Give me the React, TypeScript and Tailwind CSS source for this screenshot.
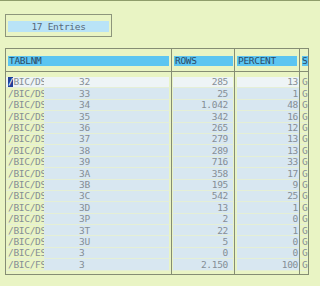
import * as React from "react";

const rows = [
  { name: "/BIC/DS", suffix: "32", count: "285", pct: "13" },
  { name: "/BIC/DS", suffix: "33", count: "25", pct: "1" },
  { name: "/BIC/DS", suffix: "34", count: "1.042", pct: "48" },
  { name: "/BIC/DS", suffix: "35", count: "342", pct: "16" },
  { name: "/BIC/DS", suffix: "36", count: "265", pct: "12" },
  { name: "/BIC/DS", suffix: "37", count: "279", pct: "13" },
  { name: "/BIC/DS", suffix: "38", count: "289", pct: "13" },
  { name: "/BIC/DS", suffix: "39", count: "716", pct: "33" },
  { name: "/BIC/DS", suffix: "3A", count: "358", pct: "17" },
  { name: "/BIC/DS", suffix: "3B", count: "195", pct: "9" },
  { name: "/BIC/DS", suffix: "3C", count: "542", pct: "25" },
  { name: "/BIC/DS", suffix: "3D", count: "13", pct: "1" },
  { name: "/BIC/DS", suffix: "3P", count: "2", pct: "0" },
  { name: "/BIC/DS", suffix: "3T", count: "22", pct: "1" },
  { name: "/BIC/DS", suffix: "3U", count: "5", pct: "0" },
  { name: "/BIC/ES", suffix: "3", count: "0", pct: "0" },
  { name: "/BIC/FS", suffix: "3", count: "2.150", pct: "100" },
];

const font = "font-['DejaVu_Sans_Mono','Liberation_Mono',monospace] text-[9.5px] tracking-[-0.3px] leading-none";

export default function App() {
  return (
    <div className={`w-[320px] h-[286px] overflow-hidden bg-[#e9f4c4] border-t border-[#8f9d6b] pl-[5px] ${font}`}>
      {/* Entries counter */}
      <div className="mt-[13px] w-[107px] h-[23px] border border-[#8d957c] pt-[6px] px-[2px]">
        <div className="h-[11px] bg-[#b9e3f7] flex items-center justify-center text-[#56687a]">
          17 Entries
        </div>
      </div>

      {/* Table */}
      <div className="mt-[11px] w-[304px] h-[227px] border border-[#858d74] flex">
        {/* TABLNM */}
        <div className="w-[166px] border-r border-[#858d74] flex flex-col">
          <div className="h-[23px] border-b border-[#858d74] pt-[7px] pl-[2px] pr-[2px]">
            <div className="h-[10px] bg-[#5cc5f1] flex items-center pl-[1px] text-[#2c4a66]">TABLNM</div>
          </div>
          <div className="h-[5px]" />
          {rows.map((r, i) => (
            <div key={i} className="h-[11.4px] flex border-b border-[#e5efd6]">
              <div className={`w-[38px] pl-[2px] flex items-center overflow-hidden whitespace-nowrap text-[#858e96] ${i === 0 ? "bg-[#eef4f6]" : ""}`}>
                {i === 0 ? (
                  <>
                    <span className="bg-[#1f3f9a] text-white">/</span>
                    <span>BIC/DS</span>
                  </>
                ) : (
                  r.name
                )}
              </div>
              <div className={`flex-1 mr-[2px] flex items-center pl-[35px] text-[#858e96] ${i === 0 ? "bg-[#eef4f6]" : "bg-[#d8e7f1]"}`}>
                {r.suffix}
              </div>
            </div>
          ))}
        </div>

        {/* ROWS */}
        <div className="w-[63px] border-r border-[#858d74] flex flex-col">
          <div className="h-[23px] border-b border-[#858d74] pt-[7px] pl-[2px] pr-[1px]">
            <div className="h-[10px] bg-[#5cc5f1] flex items-center pl-[1px] text-[#2c4a66]">ROWS</div>
          </div>
          <div className="h-[5px]" />
          {rows.map((r, i) => (
            <div key={i} className="h-[11.4px] flex border-b border-[#e5efd6] pl-[1px] pr-[1px]">
              <div className={`flex-1 flex items-center justify-end pr-[5px] text-[#858e96] ${i === 0 ? "bg-[#eef4f6]" : "bg-[#d8e7f1]"}`}>
                {r.count}
              </div>
            </div>
          ))}
        </div>

        {/* PERCENT */}
        <div className="w-[65px] border-r border-[#858d74] flex flex-col">
          <div className="h-[23px] border-b border-[#858d74] pt-[7px] pl-[2px] pr-[2px]">
            <div className="h-[10px] bg-[#5cc5f1] flex items-center pl-[1px] text-[#2c4a66]">PERCENT</div>
          </div>
          <div className="h-[5px]" />
          {rows.map((r, i) => (
            <div key={i} className="h-[11.4px] flex border-b border-[#e5efd6] pl-[2px]">
              <div className={`flex-1 flex items-center justify-end pr-[1px] text-[#858e96] ${i === 0 ? "bg-[#eef4f6]" : "bg-[#d8e7f1]"}`}>
                {r.pct}
              </div>
            </div>
          ))}
        </div>

        {/* S */}
        <div className="flex-1 flex flex-col">
          <div className="h-[23px] border-b border-[#858d74] pt-[7px] pl-[2px]">
            <div className="h-[10px] bg-[#5cc5f1] flex items-center text-[#2c4a66] overflow-hidden">S</div>
          </div>
          <div className="h-[5px]" />
          {rows.map((_, i) => (
            <div key={i} className="h-[11.4px] flex items-center pl-[2px] border-b border-[#e5efd6] text-[#858e96]">
              G
            </div>
          ))}
        </div>
      </div>
    </div>
  );
}
